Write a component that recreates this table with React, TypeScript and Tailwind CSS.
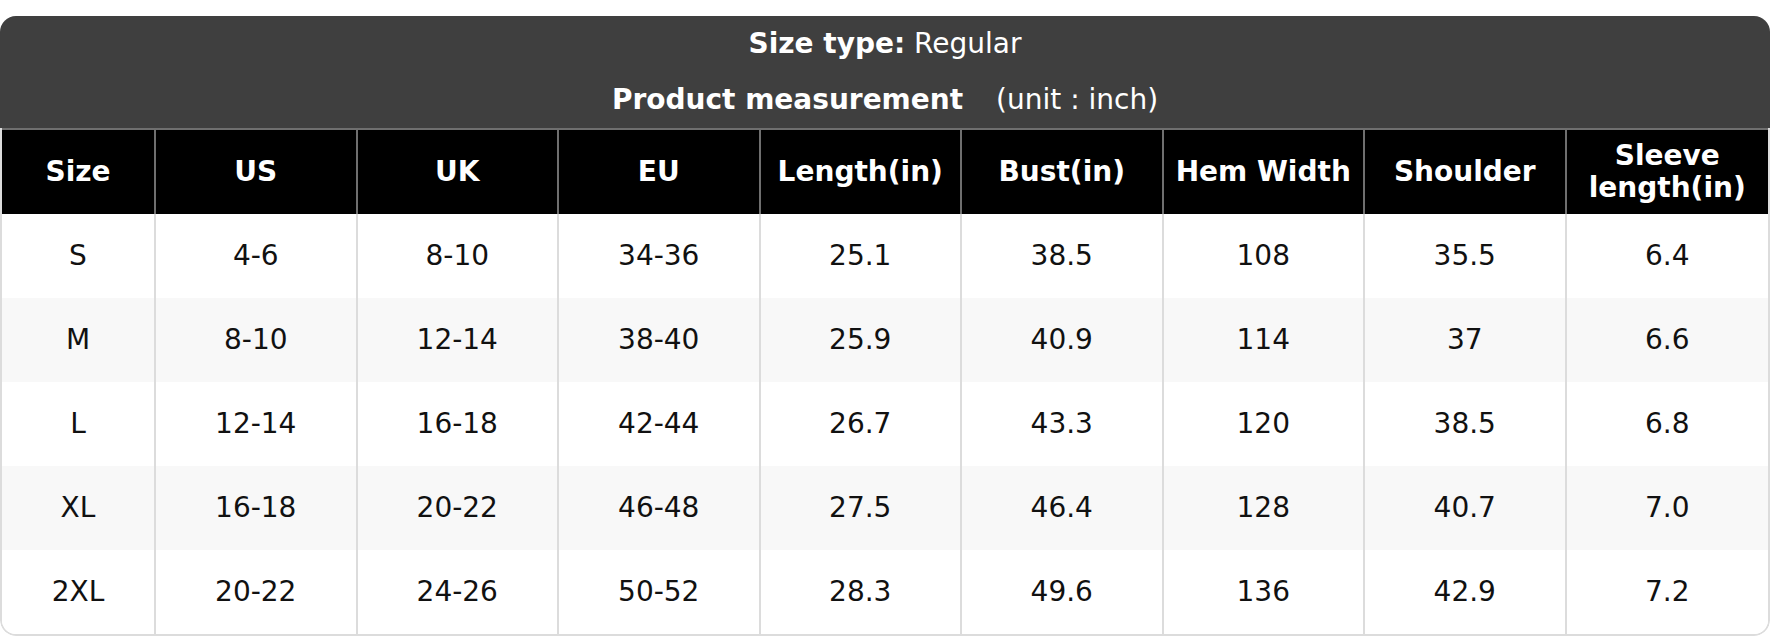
import React from "react";

const headers: React.ReactNode[] = [
  "Size",
  "US",
  "UK",
  "EU",
  "Length(in)",
  "Bust(in)",
  "Hem Width",
  "Shoulder",
  <>
    Sleeve
    <br />
    length(in)
  </>,
];

const rows: string[][] = [
  ["S", "4-6", "8-10", "34-36", "25.1", "38.5", "108", "35.5", "6.4"],
  ["M", "8-10", "12-14", "38-40", "25.9", "40.9", "114", "37", "6.6"],
  ["L", "12-14", "16-18", "42-44", "26.7", "43.3", "120", "38.5", "6.8"],
  ["XL", "16-18", "20-22", "46-48", "27.5", "46.4", "128", "40.7", "7.0"],
  ["2XL", "20-22", "24-26", "50-52", "28.3", "49.6", "136", "42.9", "7.2"],
];

export default function App() {
  return (
    <div
      className="w-[1770px] bg-white pt-[16px]"
      style={{ fontFamily: '"DejaVu Sans", "Liberation Sans", sans-serif' }}
    >
      <div className="rounded-[16px] overflow-hidden">
        <div className="h-[112px] bg-[#3f3f3f] text-white text-[28px] flex flex-col items-center pt-[7px]">
          <div className="h-[42px] leading-[42px]">
            <span className="font-bold">Size type:</span> Regular
          </div>
          <div className="h-[42px] leading-[42px] mt-[14px]">
            <span className="font-bold">Product measurement</span>
            <span className="ml-[33px]">(unit : inch)</span>
          </div>
        </div>
        <div className="border-x-2 border-b-2 border-[#dcdcdc] rounded-b-[16px] overflow-hidden">
          <div className="grid grid-cols-[154px_repeat(8,minmax(0,1fr))] h-[86px] bg-black border-t-2 border-[#6f6f6f] text-white text-[28px] font-bold leading-[32px]">
            {headers.map((h, i) => (
              <div
                key={i}
                className={
                  "flex items-center justify-center text-center px-[8px] " +
                  (i < 8 ? "border-r-2 border-[#6f6f6f]" : "")
                }
              >
                <span>{h}</span>
              </div>
            ))}
          </div>
          {rows.map((r, ri) => (
            <div
              key={ri}
              className={
                "grid grid-cols-[154px_repeat(8,minmax(0,1fr))] h-[84px] text-[28px] text-[#111]" +
                (ri % 2 === 1 ? " bg-[#f8f8f8]" : " bg-white")
              }
            >
              {r.map((c, ci) => (
                <div
                  key={ci}
                  className={
                    "flex items-center justify-center " +
                    (ci < 8 ? "border-r-2 border-[#dcdcdc]" : "")
                  }
                >
                  {c}
                </div>
              ))}
            </div>
          ))}
        </div>
      </div>
    </div>
  );
}
